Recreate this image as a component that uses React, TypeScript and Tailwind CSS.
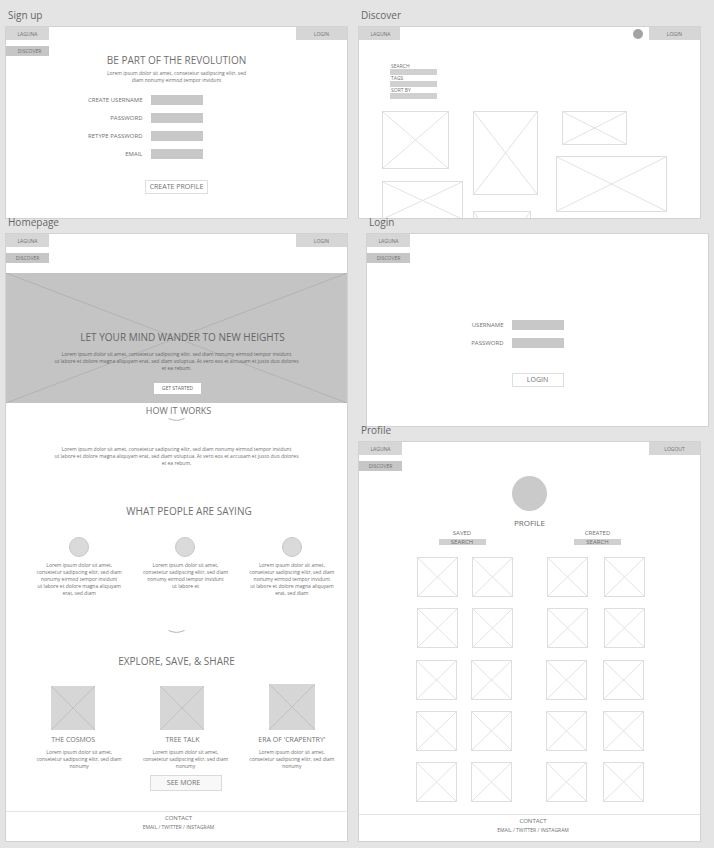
import type { ReactNode } from "react";

const TAG = "flex items-center justify-center text-[5px] leading-[8px]";
const BODY = "text-center text-[5px] leading-[7px] whitespace-nowrap";
const HEADING = "text-center text-[10px] leading-[16px] whitespace-nowrap";
const FIELD = "block h-[10px] w-[52px] bg-[#c8c8c8] px-1 text-[6px] outline-none";
const LABEL = "text-right text-[6px] leading-[10px] whitespace-nowrap";

function Board({ title, className = "", frameClass = "", children }: {
  title: string;
  className?: string;
  frameClass?: string;
  children: ReactNode;
}) {
  return (
    <section className={className}>
      <h2 className="h-[14px] pl-[3px] text-[10px] leading-[6px] text-[#666666]">{title}</h2>
      <div className={`overflow-hidden border border-[#d2d2d2] bg-white ${frameClass}`}>{children}</div>
    </section>
  );
}

function TopBar({ action, avatar = false }: { action?: string; avatar?: boolean }) {
  return (
    <div className="flex h-[13px] items-stretch">
      <a href="#home" className={`${TAG} bg-[#d6d6d6] ${avatar ? "w-[41px] pl-[2px]" : "w-[43px]"}`}>LAGUNA</a>
      <div className="flex-1" />
      {avatar && <span className="mr-[6px] h-[10px] w-[10px] self-center rounded-full bg-[#a3a3a3]" />}
      {action && <a href="#session" className={`${TAG} w-[51px] bg-[#d6d6d6]`}>{action}</a>}
    </div>
  );
}

function DiscoverTag({ className = "" }: { className?: string }) {
  return (
    <a href="#discover" className={`${TAG} mt-[6px] h-[10px] w-[43px] bg-[#c6c6c6] ${className}`}>
      DISCOVER
    </a>
  );
}

function Cross({ stroke }: { stroke: string }) {
  return (
    <svg className="block h-full w-full" viewBox="0 0 100 100" preserveAspectRatio="none" aria-hidden="true">
      <path d="M0 0L100 100M100 0L0 100" fill="none" stroke={stroke} strokeWidth="1" vectorEffect="non-scaling-stroke" />
    </svg>
  );
}

function Picture({ className }: { className: string }) {
  return (
    <div className={`border border-[#dedede] ${className}`}>
      <Cross stroke="#e2e2e2" />
    </div>
  );
}

function Chevron({ className = "" }: { className?: string }) {
  return (
    <svg className={`mx-auto block h-[3px] w-[17px] ${className}`} viewBox="0 0 17 3" aria-hidden="true">
      <path d="M0.5 0.5Q5 2.3 8.5 2.4Q12 2.3 16.5 0.5" fill="none" stroke="#b4b4b4" strokeWidth="1" />
    </svg>
  );
}

function Field({ id, label, type = "text" }: { id: string; label: string; type?: string }) {
  return (
    <div className="grid grid-cols-[1fr_52px_1fr] gap-x-2">
      <label htmlFor={id} className={LABEL}>{label}</label>
      <input id={id} type={type} className={FIELD} />
    </div>
  );
}

function Footer({ className }: { className: string }) {
  return (
    <footer className={`border-t border-[#e4e4e4] text-center ${className}`}>
      <h4 className="text-[6px] leading-[8px]">CONTACT</h4>
      <p className="mt-px text-[5px] leading-[8px]">
        <a href="#email">EMAIL</a> / <a href="#twitter">TWITTER</a> / <a href="#instagram">INSTAGRAM</a>
      </p>
    </footer>
  );
}

function LongCopy({ className }: { className: string }) {
  return (
    <p className={`${BODY} ${className}`}>
      Lorem ipsum dolor sit amet, consetetur sadipscing elitr, sed diam nonumy eirmod tempor invidunt
      <br />
      ut labore et dolore magna aliquyam erat, sed diam voluptua. At vero eos et accusam et justo duo dolores
      <br />
      et ea rebum.
    </p>
  );
}

function SignUp() {
  return (
    <Board title="Sign up" frameClass="h-[193px]">
      <TopBar action="LOGIN" />
      <DiscoverTag className="pl-[4px]" />
      <h3 className={`${HEADING} -mt-1`}>BE PART OF THE REVOLUTION</h3>
      <p className={`${BODY} mt-[2px]`}>
        Lorem ipsum dolor sit amet, consetetur sadipscing elitr, sed
        <br />
        diam nonumy eirmod tempor invidunt
      </p>
      <form className="mt-[11px] flex flex-col gap-2">
        <Field id="new-username" label="CREATE USERNAME" />
        <Field id="new-password" label="PASSWORD" type="password" />
        <Field id="retype-password" label="RETYPE PASSWORD" type="password" />
        <Field id="email" label="EMAIL" type="email" />
        <button type="button" className="mx-auto mt-[13px] h-[14px] w-[63px] border border-[#dedede] text-[7px] leading-[12px] whitespace-nowrap">
          CREATE PROFILE
        </button>
      </form>
    </Board>
  );
}

const QUOTES = [
  ["Lorem ipsum dolor sit amet,", "consetetur sadipscing elitr, sed diam", "nonumy eirmod tempor invidunt", "ut labore et dolore magna aliquyam", "erat, sed diam"],
  ["Lorem ipsum dolor sit amet,", "consetetur sadipscing elitr, sed diam", "nonumy eirmod tempor invidunt", "ut labore et"],
  ["Lorem ipsum dolor sit amet,", "consetetur sadipscing elitr, sed diam", "nonumy eirmod tempor invidunt", "ut labore et dolore magna aliquyam", "erat, sed diam"],
];

const WORLDS = [
  { name: "THE COSMOS", size: "h-[44px] w-[44px]", shift: "pr-[12px]" },
  { name: "TREE TALK", size: "h-[44px] w-[44px]", shift: "pr-[6px]" },
  { name: "ERA OF 'CRAPENTRY'", size: "h-[46px] w-[46px]", shift: "" },
];

function Homepage() {
  return (
    <Board title="Homepage" frameClass="pb-[10px]">
      <TopBar action="LOGIN" />
      <DiscoverTag />
      <div className="mt-[10px] grid h-[130px] bg-[#c4c4c4]">
        <div className="col-start-1 row-start-1 h-[130px]">
          <Cross stroke="#b3b3b3" />
        </div>
        <div className="col-start-1 row-start-1 pt-[56px] text-[#666666]">
          <h3 className={`${HEADING} pl-[12px]`}>LET YOUR MIND WANDER TO NEW HEIGHTS</h3>
          <LongCopy className="mt-[6px]" />
          <div className="mt-[11px] pl-[2px]">
            <button type="button" className="mx-auto block h-[11px] w-[47px] bg-white text-[5px] leading-[11px]">
              GET STARTED
            </button>
          </div>
        </div>
      </div>
      <h3 className="mt-[2px] pl-[4px] text-center text-[9px] leading-[12px]">HOW IT WORKS</h3>
      <Chevron className="mt-px" />
      <LongCopy className="mt-[25px]" />
      <h3 className={`${HEADING} mt-[36px] pl-[25px]`}>WHAT PEOPLE ARE SAYING</h3>
      <div className="mt-[18px] mr-[2px] ml-[20px] grid grid-cols-3">
        {QUOTES.map((lines, i) => (
          <figure key={i}>
            <div className="mx-auto h-[20px] w-[20px] rounded-full border border-[#c8c8c8] bg-[#dadada]" />
            <blockquote className={`${BODY} mt-[5px]`}>
              {lines.map((line) => (
                <span key={line} className="block">{line}</span>
              ))}
            </blockquote>
          </figure>
        ))}
      </div>
      <Chevron className="mt-[33px]" />
      <h3 className={`${HEADING} mt-[20px]`}>EXPLORE, SAVE, &amp; SHARE</h3>
      <div className="mt-[15px] mr-[2px] ml-[20px] grid grid-cols-3 items-end">
        {WORLDS.map((world) => (
          <article key={world.name} className="text-center">
            <div className={world.shift}>
              <div className={`mx-auto bg-[#d6d6d6] ${world.size}`}>
                <Cross stroke="#c2c2c2" />
              </div>
              <h4 className="mt-[6px] text-[7px] leading-[8px] whitespace-nowrap">{world.name}</h4>
            </div>
            <p className={`${BODY} mt-[5px]`}>
              Lorem ipsum dolor sit amet,
              <br />
              consetetur sadipscing elitr, sed diam
              <br />
              nonumy
            </p>
          </article>
        ))}
      </div>
      <div className="mt-[5px] flex justify-center pl-[18px]">
        <button type="button" className="h-[16px] w-[72px] border border-[#dadada] bg-[#f8f8f8] pr-[4px] text-[7px] leading-[14px]">
          SEE MORE
        </button>
      </div>
      <Footer className="mt-[20px] pt-[2px] pl-[4px]" />
    </Board>
  );
}

function Filter({ id, label }: { id: string; label: string }) {
  return (
    <div>
      <label htmlFor={id} className="block pl-px text-[5px] leading-[6px]">{label}</label>
      <input id={id} className="block h-[6px] w-[47px] bg-[#d0d0d0] text-[5px] outline-none" />
    </div>
  );
}

function Discover() {
  return (
    <Board title="Discover" className="mr-2" frameClass="h-[193px]">
      <TopBar action="LOGIN" avatar />
      <form className="mt-[23px] ml-[31px]">
        <Filter id="search" label="SEARCH" />
        <Filter id="tags" label="TAGS" />
        <Filter id="sort" label="SORT BY" />
      </form>
      <div className="mt-[12px] ml-[23px] flex items-start">
        <div className="flex w-[91px] flex-col gap-[12px]">
          <Picture className="h-[58px] w-[67px]" />
          <Picture className="h-[39px] w-[81px]" />
        </div>
        <div className="flex w-[83px] flex-col gap-[16px]">
          <Picture className="h-[84px] w-[65px]" />
          <Picture className="h-[84px] w-[58px]" />
        </div>
        <div className="flex flex-col gap-[11px]">
          <Picture className="ml-[6px] h-[34px] w-[65px]" />
          <Picture className="h-[56px] w-[111px]" />
        </div>
      </div>
    </Board>
  );
}

function Login() {
  return (
    <Board title="Login" className="ml-2" frameClass="h-[194px]">
      <TopBar />
      <DiscoverTag />
      <form className="mt-[57px] flex flex-col gap-2">
        <Field id="username" label="USERNAME" />
        <Field id="password" label="PASSWORD" type="password" />
        <button type="button" className="mx-auto mt-[17px] h-[14px] w-[52px] border border-[#dedede] text-[7px] leading-[12px]">
          LOGIN
        </button>
      </form>
    </Board>
  );
}

function Collection({ id, title, gap, shift }: { id: string; title: string; gap: string; shift: string }) {
  const tile = "h-[40px] w-[41px]";
  return (
    <div>
      <div className={`flex flex-col items-center ${shift}`}>
        <label htmlFor={id} className="text-[6px] leading-[8px]">{title}</label>
        <input
          id={id}
          placeholder="SEARCH"
          className="mt-[2px] block h-[6px] w-[47px] bg-[#d0d0d0] text-center text-[6px] leading-[6px] outline-none placeholder:text-[#707070]"
        />
      </div>
      <div className={`mt-[12px] grid grid-cols-[auto_auto] justify-center gap-y-[11px] ${gap}`}>
        {Array.from({ length: 4 }, (_, i) => <Picture key={i} className={tile} />)}
      </div>
      <div className={`mt-[12px] grid grid-cols-[auto_auto] justify-center gap-y-[11px] pr-[3px] ${gap}`}>
        {Array.from({ length: 6 }, (_, i) => <Picture key={i} className={tile} />)}
      </div>
    </div>
  );
}

function Profile() {
  return (
    <Board title="Profile" className="mr-2" frameClass="pb-[7px]">
      <TopBar action="LOGOUT" />
      <DiscoverTag />
      <div className="mx-auto mt-[5px] h-[35px] w-[35px] rounded-full bg-[#cacaca]" />
      <h3 className="mt-[6px] text-center text-[8px] leading-[12px] text-[#666666]">PROFILE</h3>
      <div className="flex justify-center gap-[31px] pl-[3px]">
        <Collection id="saved-search" title="SAVED" gap="gap-x-[14px]" shift="pr-[6px]" />
        <Collection id="created-search" title="CREATED" gap="gap-x-[16px]" shift="pl-[3px]" />
      </div>
      <Footer className="mt-[12px] pt-[2px] pl-[7px]" />
    </Board>
  );
}

export default function App() {
  return (
    <main className="grid min-h-screen grid-cols-[343fr_351fr] gap-x-[10px] bg-[#e4e4e4] px-[5px] pt-[12px] pb-[7px] font-['Open_Sans','Noto_Sans',sans-serif] text-[#707070]">
      <div>
        <SignUp />
        <Homepage />
      </div>
      <div>
        <Discover />
        <Login />
        <Profile />
      </div>
    </main>
  );
}
